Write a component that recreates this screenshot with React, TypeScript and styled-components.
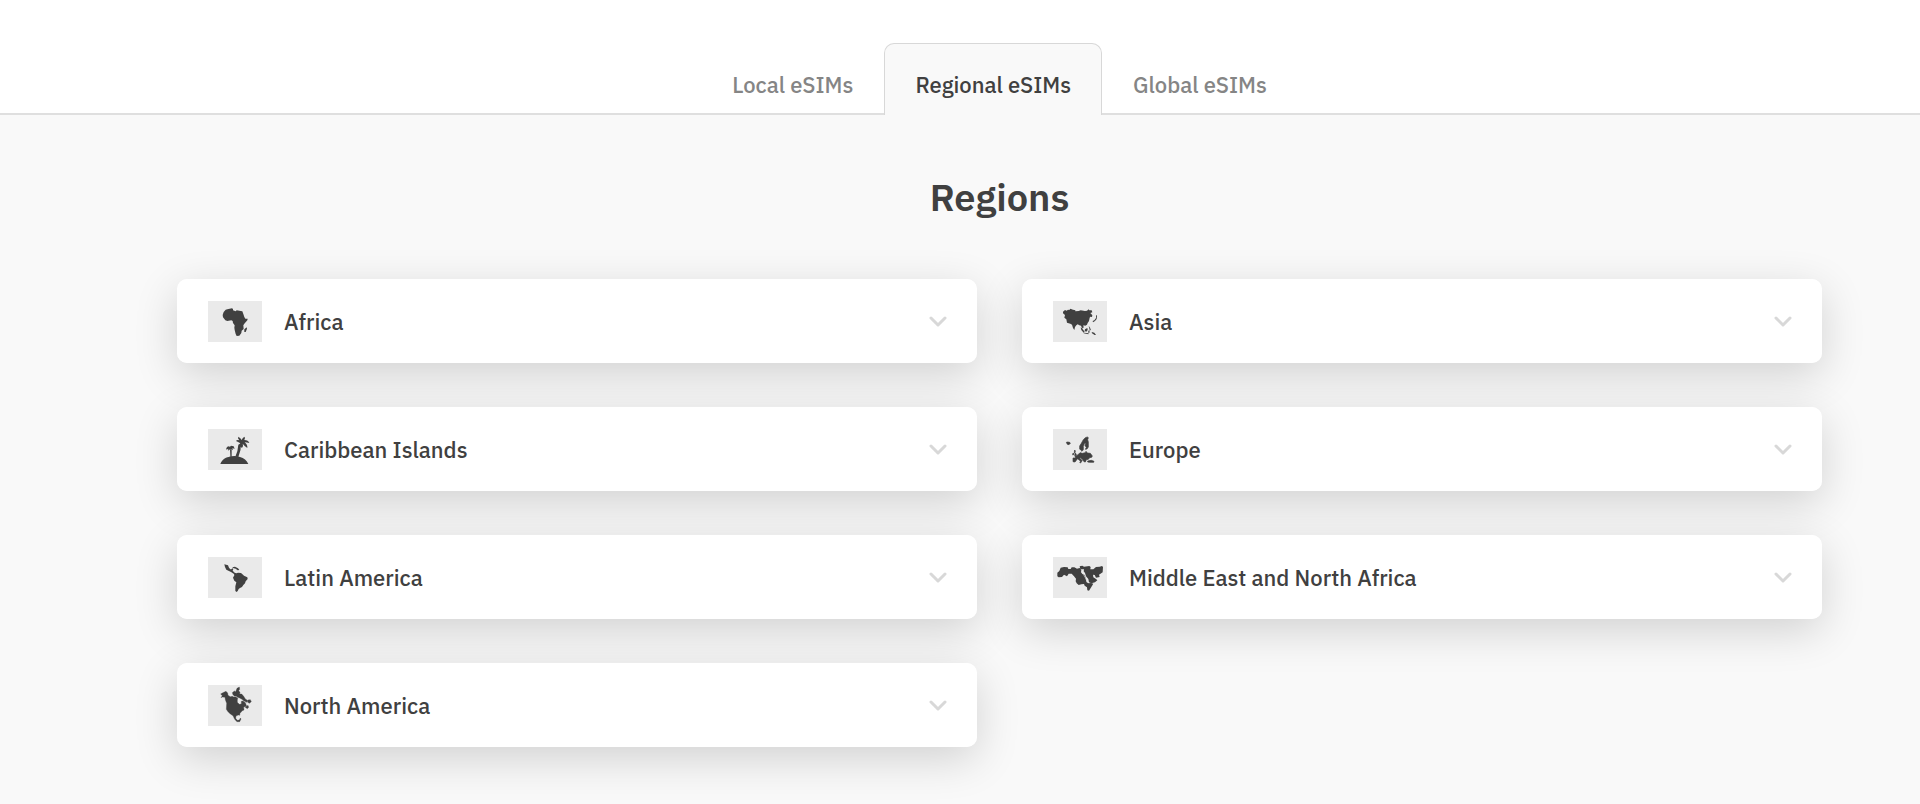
import React, { useState } from "react";
import styled, { createGlobalStyle } from "styled-components";

const GlobalStyle = createGlobalStyle`
  *, *::before, *::after { box-sizing: border-box; }
  body {
    margin: 0;
    background: #f9f9f9;
    color: #404040;
    font-family: "IBM Plex Sans", Roboto, "Liberation Sans", sans-serif;
  }
`;

const TabBar = styled.div`
  display: flex;
  justify-content: center;
  padding: 43px 98px 0 177px;
  background: #ffffff;
  border-bottom: 2px solid #dfdfdf;
`;

const Tab = styled.button<{ $active: boolean }>`
  height: 72px;
  margin-bottom: -2px;
  padding: 11px 30px 0;
  border: 1px solid ${(p) => (p.$active ? "#d8d8d8" : "transparent")};
  border-bottom: 0;
  border-radius: 10px 10px 0 0;
  background: ${(p) => (p.$active ? "#f9f9f9" : "transparent")};
  color: ${(p) => (p.$active ? "#404040" : "#858585")};
  font: inherit;
  font-size: 22px;
  font-weight: 500;
  line-height: 32px;
  cursor: pointer;
`;

const Main = styled.main`
  padding: 58px 98px 57px 177px;
`;

const Title = styled.h1`
  margin: 0 0 58px;
  font-size: 38px;
  font-weight: 600;
  line-height: 48px;
  text-align: center;
`;

const Grid = styled.ul`
  display: grid;
  grid-template-columns: repeat(2, minmax(0, 1fr));
  gap: 44px 45px;
  margin: 0;
  padding: 0;
  list-style: none;
`;

const RegionItem = styled.li`
  border-radius: 10px;
  box-shadow: 0 12px 44px rgba(0, 0, 0, 0.16);
`;

const RegionCard = styled.button`
  position: relative;
  display: flex;
  align-items: center;
  gap: 22px;
  width: 100%;
  height: 84px;
  padding: 1px 30px 0 31px;
  border: 0;
  border-radius: 10px;
  background: #ffffff;
  color: inherit;
  font: inherit;
  font-size: 22px;
  font-weight: 500;
  line-height: 33px;
  text-align: left;
  cursor: pointer;
`;

const RegionName = styled.span`
  flex: 1;
`;

const Flag = styled.svg`
  flex: none;
  width: 54px;
  height: 41px;
  background: #eaeaea;
  fill: #404040;
`;

const Chevron = styled.svg`
  flex: none;
  width: 18px;
  height: 13px;
  fill: none;
  stroke: #d8d8d8;
  stroke-width: 3;
  stroke-linecap: round;
  stroke-linejoin: round;
`;

const regions: { name: string; art: React.ReactNode }[] = [
  {
    name: "Africa",
    art: (
      <>
        <path d="M77 44 82 43 96 40 99 42 99 46 107 49 110 46 122 48 127 49 130 57 133 66 136 71 143 71 142 76 133 86 130 91 131 102 125 107 124 114 118 122 110 123 107 117 104 105 103 98 104 91 99 84 98 78 94 76 82 78 76 76 69 67 68 60 71 51Z" />
        <path d="M140 97 141 101 137 111 133 111 133 103Z" />
      </>
    ),
  },
  {
    name: "Asia",
    art: (
      <>
        <path d="M54 50 60 45 65 47 69 44 73 45 76 41 84 44 91 46 91 49 101 48 107 46 120 48 126 47 131 43 133 46 140 46 142 52 136 54 142 61 141 66 136 65 134 68 132 78 128 84 126 89 121 92 115 91 116 98 111 99 108 92 103 91 98 88 94 91 90 96 88 105 84 99 81 89 76 86 66 83 64 73 58 68 60 60 54 55Z" />
        <path d="M143 78 148 76 153 69 153 60 156 62 155 72 150 78 144 82Z" />
        <path d="M107 97 111 100 119 110 116 113 109 105Z" />
        <path d="M120 103 127 99 128 105 124 110 119 108Z" />
        <path d="M131 92 135 98 138 106 134 105Z" />
        <path d="M117 113 131 115 130 118 116 115Z" />
        <path d="M130 107 134 106 133 114 130 113Z" />
        <path d="M140 111 148 113 153 120 149 120 141 115Z" />
      </>
    ),
  },
  {
    name: "Caribbean Islands",
    art: (
      <>
        <path d="M61 123C67 107 80 102 90 101Q104 97 120 102C132 105 140 112 145 123Z" />
        <path d="M106 101Q114 84 115 65L123 60Q124 82 115 102Z" />
        <path d="M121 61Q114 56 108 54 111 49 118 52 112 46 115 41 122 45 125 51 127 45 133 41 137 44 133 51 145 51 148 60 141 59 134 58 143 65 142 75 134 70 128 62 131 71 125 75 121 67 116 77 110 75Q112 66 121 61Z" />
        <path d="M88 101 91 99 90 79 95 79 95 99 98 101Z" />
        <path d="M79 75 84 70 90 71 93 68 101 70 104 77 97 76 99 82 93 78 88 80 84 83 85 77 79 80Z" />
      </>
    ),
  },
  {
    name: "Europe",
    art: (
      <g stroke="#404040" strokeWidth="2">
        <path d="M64 58 68 57 74 58 76 61 72 65 67 64Z" />
        <path d="M127 42 130 44 128 50 130 57 130 72 126 78 121 79 124 73 120 68 122 61 119 60 115 70 115 80 111 85 107 81 104 78 104 69 109 61 115 50 121 44Z" />
        <path d="M89 81 91 84 90 89 94 94 93 97 89 98 90 92 88 87ZM84 90 86 91 86 95 83 96Z" />
        <path d="M84 105 92 105 90 100 98 96 105 89 112 91 121 89 123 85 127 90 136 91 142 99 140 103 134 104 130 109 124 110 121 117 117 116 112 109 107 104 104 105 112 113 109 116 107 120 104 118 107 115 98 107 94 112 90 117 84 116Z" />
        <path d="M128 114 139 112 147 115 146 118 133 118 128 117Z" />
      </g>
    ),
  },
  {
    name: "Latin America",
    art: (
      <>
        <path d="M73 40 84 43 87 50 91 55 94 55 97 52 100 54 98 59 104 65 109 67 114 65 123 66 129 71 132 74 142 79 143 84 137 91 135 97 130 102 126 108 120 111 116 114 113 120 110 123 106 120 106 106 109 94 103 89 99 80 103 73 102 69 93 63 79 56 75 48Z" />
        <path d="M97 49 105 47 114 52 118 57 113 58 107 53 99 51Z" />
      </>
    ),
  },
  {
    name: "Middle East and North Africa",
    art: (
      <>
        <path d="M47 50 57 48 68 49 70 54 77 54 80 49 88 49 96 53 104 51 109 57 108 64 112 69 119 72 123 83 125 94 131 97 138 96 145 98 139 108 132 119 127 118 126 109 119 104 117 99 109 100 101 102 95 97 92 91 93 83 87 76 80 68 71 68 66 76 57 71 51 78 41 79 37 76 37 65 43 60Z" />
        <path d="M104 46 112 44 117 47 133 45 137 48 136 55 145 55 153 48 164 47 171 45 174 48 173 64 162 71 164 78 153 80 149 72 144 71 145 79 153 84 157 88 150 94 139 97 132 94 130 84 123 76 120 66 116 61 117 55 106 55Z" />
        <path d="M116 71 121 80 127 94" fill="none" stroke="#eaeaea" strokeWidth="2" />
      </>
    ),
  },
  {
    name: "North America",
    art: (
      <g stroke="#404040" strokeWidth="1">
        <path d="M67 42 78 37 83 42 84 49 91 53 97 52 101 54 106 53 113 57 112 63 112 70 118 76 124 75 124 67 129 66 136 71 140 82 131 84 132 93 127 95 120 103 119 109 115 108 108 111 107 118 112 124 118 123 121 117 123 120 119 128 111 128 104 121 99 110 91 105 84 98 79 91 80 73 76 62 75 55 67 54 63 56 67 50 62 45Z" />
        <path d="M97 41 103 36 107 38 111 28 118 24 119 31 116 35 120 40 119 45 125 45 131 52 136 60 142 64 140 70 131 65 126 61 119 57 113 55 108 51 103 51 99 47Z" />
        <path d="M143 63 151 62 154 68 148 73 142 69Z" />
        <path d="M136 85 144 79 146 85 142 89Z" />
      </g>
    ),
  },
];

const tabs = ["Local eSIMs", "Regional eSIMs", "Global eSIMs"];

export default function App() {
  const [active, setActive] = useState("Regional eSIMs");

  return (
    <>
      <GlobalStyle />
      <TabBar role="tablist" aria-label="eSIM types">
        {tabs.map((tab) => (
          <Tab
            key={tab}
            type="button"
            role="tab"
            aria-selected={tab === active}
            $active={tab === active}
            onClick={() => setActive(tab)}
          >
            {tab}
          </Tab>
        ))}
      </TabBar>
      <Main>
        <Title>Regions</Title>
        <Grid>
          {regions.map(({ name, art }) => (
            <RegionItem key={name}>
              <RegionCard type="button" aria-expanded={false}>
                <Flag viewBox="24 18 162 123" aria-hidden="true">
                  {art}
                </Flag>
                <RegionName>{name}</RegionName>
                <Chevron viewBox="0 0 18 13" aria-hidden="true">
                  <path d="M2 3l7 7 7-7" />
                </Chevron>
              </RegionCard>
            </RegionItem>
          ))}
        </Grid>
      </Main>
    </>
  );
}
